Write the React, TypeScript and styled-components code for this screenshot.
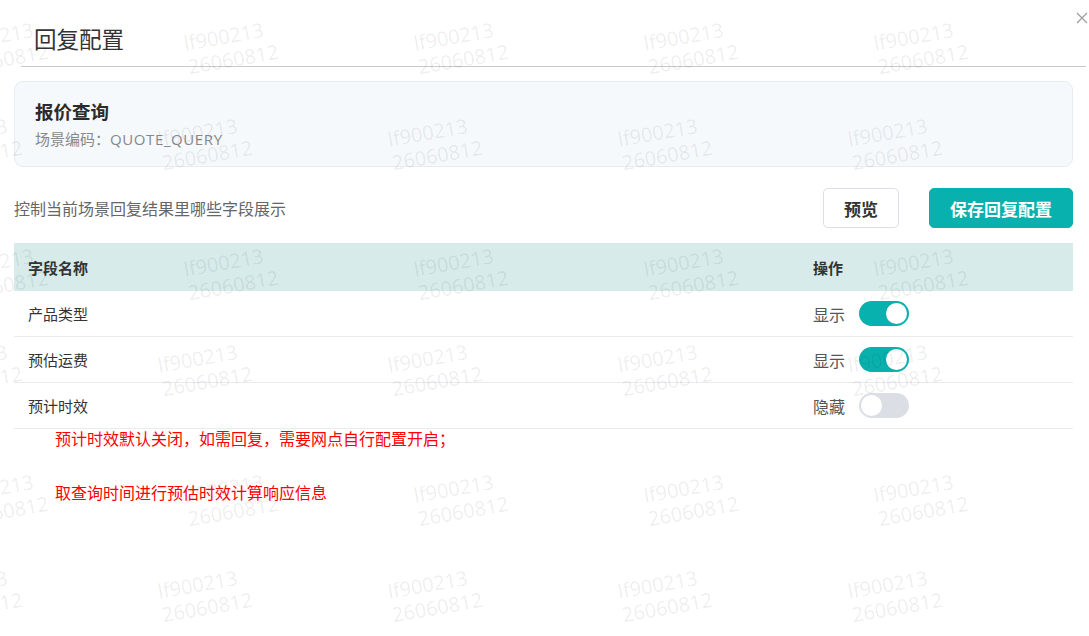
import styled, { createGlobalStyle } from "styled-components"

const GlobalStyle = createGlobalStyle`
  html, body {
    margin: 0;
    padding: 0;
    background: #fff;
  }
  body {
    font-family: "Open Sans", "Noto Sans CJK SC", sans-serif;
    color: #333;
  }
`

const Dialog = styled.div`
  position: relative;
  width: 1089px;
  height: 636px;
  overflow: hidden;
  background: #fff;
`
const Header = styled.div`
  margin: 0 3px 0 21px;
  padding: 26px 0 12px 13px;
  border-bottom: 1px solid #c9c9c9;
`
const Title = styled.h2`
  margin: 0;
  font-size: 22.5px;
  line-height: 28px;
  font-weight: 400;
  color: #333;
`
const CloseButton = styled.button`
  position: absolute;
  top: 11px;
  right: 1px;
  width: 13px;
  height: 13px;
  padding: 0;
  border: none;
  background: none;
  display: flex;
  align-items: center;
  justify-content: center;
  cursor: pointer;
`
const Body = styled.div`
  padding: 14px 16px 0 14px;
  display: flex;
  flex-direction: column;
`
const SceneCard = styled.div`
  height: 86px;
  box-sizing: border-box;
  padding: 18px 20px 0;
  border: 1px solid #e7ecf1;
  border-radius: 9px;
  background: #f5f9fc;
`
const SceneName = styled.div`
  font-size: 18.5px;
  line-height: 24px;
  font-weight: 700;
  color: #2b2b2b;
`
const SceneCode = styled.div`
  margin-top: 5px;
  font-size: 15px;
  line-height: 20px;
  color: #888;
  & span {
    letter-spacing: 0.6px;
  }
`
const Toolbar = styled.div`
  margin-top: 21px;
  height: 40px;
  display: flex;
  align-items: center;
  gap: 30px;
`
const Hint = styled.div`
  flex: 1;
  font-size: 16px;
  color: #666;
`
const Button = styled.button<{ $primary?: boolean }>`
  height: 40px;
  padding: 0 20px;
  border-radius: 5px;
  font-family: inherit;
  font-size: 17px;
  font-weight: 700;
  cursor: pointer;
  border: 1px solid ${(p) => (p.$primary ? "#09b1ae" : "#dcdfe6")};
  background: ${(p) => (p.$primary ? "#09b1ae" : "#fff")};
  color: ${(p) => (p.$primary ? "#fff" : "#333")};
`
const Table = styled.div`
  margin-top: 15px;
  display: flex;
  flex-direction: column;
`
const Row = styled.div<{ $head?: boolean }>`
  display: grid;
  grid-template-columns: 1fr 274px;
  align-items: center;
  box-sizing: border-box;
  height: ${(p) => (p.$head ? "48px" : "46px")};
  background: ${(p) => (p.$head ? "#d6ebea" : "transparent")};
  border-bottom: ${(p) => (p.$head ? "none" : "1px solid #e9ebee")};
  font-size: 15px;
  font-weight: ${(p) => (p.$head ? 700 : 400)};
  color: #333;
`
const Cell = styled.div`
  padding-left: 14px;
  display: flex;
  align-items: center;
  gap: 14px;
`
const StateLabel = styled.span`
  font-size: 16px;
  color: #555;
`
const Switch = styled.span<{ $on: boolean }>`
  position: relative;
  width: 50px;
  height: 25px;
  border-radius: 13px;
  background: ${(p) => (p.$on ? "#09b1ae" : "#dcdee5")};
  &::after {
    content: "";
    position: absolute;
    top: 2px;
    left: ${(p) => (p.$on ? "27px" : "2px")};
    width: 21px;
    height: 21px;
    border-radius: 50%;
    background: #fff;
  }
`
const Notes = styled.div`
  padding-left: 41px;
  display: flex;
  flex-direction: column;
  gap: 34px;
  color: #f00;
  font-size: 16px;
  line-height: 20px;
`
const Watermarks = styled.div`
  position: absolute;
  inset: 0;
  pointer-events: none;
`
const Mark = styled.div`
  position: absolute;
  font-family: "Open Sans", sans-serif;
  font-size: 20px;
  line-height: 24px;
  color: rgba(0, 0, 0, 0.085);
  transform: rotate(-10deg);
  transform-origin: left top;
  white-space: nowrap;
`

const fields = [
  { name: "产品类型", on: true },
  { name: "预估运费", on: true },
  { name: "预计时效", on: false },
]

// watermark tiles: pairs of staggered rows, 226px apart
function renderMarks() {
  const marks = []
  for (let r = 0; r < 6; r++) {
    const odd = r % 2 === 1
    const top = odd ? 32 + (r - 1) * 113 + 96 : 32 + r * 113
    const start = (odd ? 156 : 182) - 230
    for (let k = 0; k < 5; k++) {
      marks.push(
        <Mark key={`${r}-${k}`} style={{ left: start + k * 230, top }}>
          lf900213
          <br />
          26060812
        </Mark>
      )
    }
  }
  return marks
}

export default function App() {
  return (
    <>
      <GlobalStyle />
      <Dialog>
        <Header>
          <Title>回复配置</Title>
        </Header>
        <CloseButton aria-label="close">
          <svg width="12" height="12" viewBox="0 0 12 12">
            <path d="M1 1L11 11M11 1L1 11" stroke="#999" strokeWidth="1.1" />
          </svg>
        </CloseButton>
        <Body>
          <SceneCard>
            <SceneName>报价查询</SceneName>
            <SceneCode>
              场景编码：<span>QUOTE_QUERY</span>
            </SceneCode>
          </SceneCard>
          <Toolbar>
            <Hint>控制当前场景回复结果里哪些字段展示</Hint>
            <Button>预览</Button>
            <Button $primary>保存回复配置</Button>
          </Toolbar>
          <Table>
            <Row $head>
              <Cell>字段名称</Cell>
              <Cell>操作</Cell>
            </Row>
            {fields.map((f) => (
              <Row key={f.name}>
                <Cell>{f.name}</Cell>
                <Cell>
                  <StateLabel>{f.on ? "显示" : "隐藏"}</StateLabel>
                  <Switch $on={f.on} />
                </Cell>
              </Row>
            ))}
          </Table>
          <Notes>
            <div>预计时效默认关闭，如需回复，需要网点自行配置开启；</div>
            <div>取查询时间进行预估时效计算响应信息</div>
          </Notes>
        </Body>
        <Watermarks>{renderMarks()}</Watermarks>
      </Dialog>
    </>
  )
}
